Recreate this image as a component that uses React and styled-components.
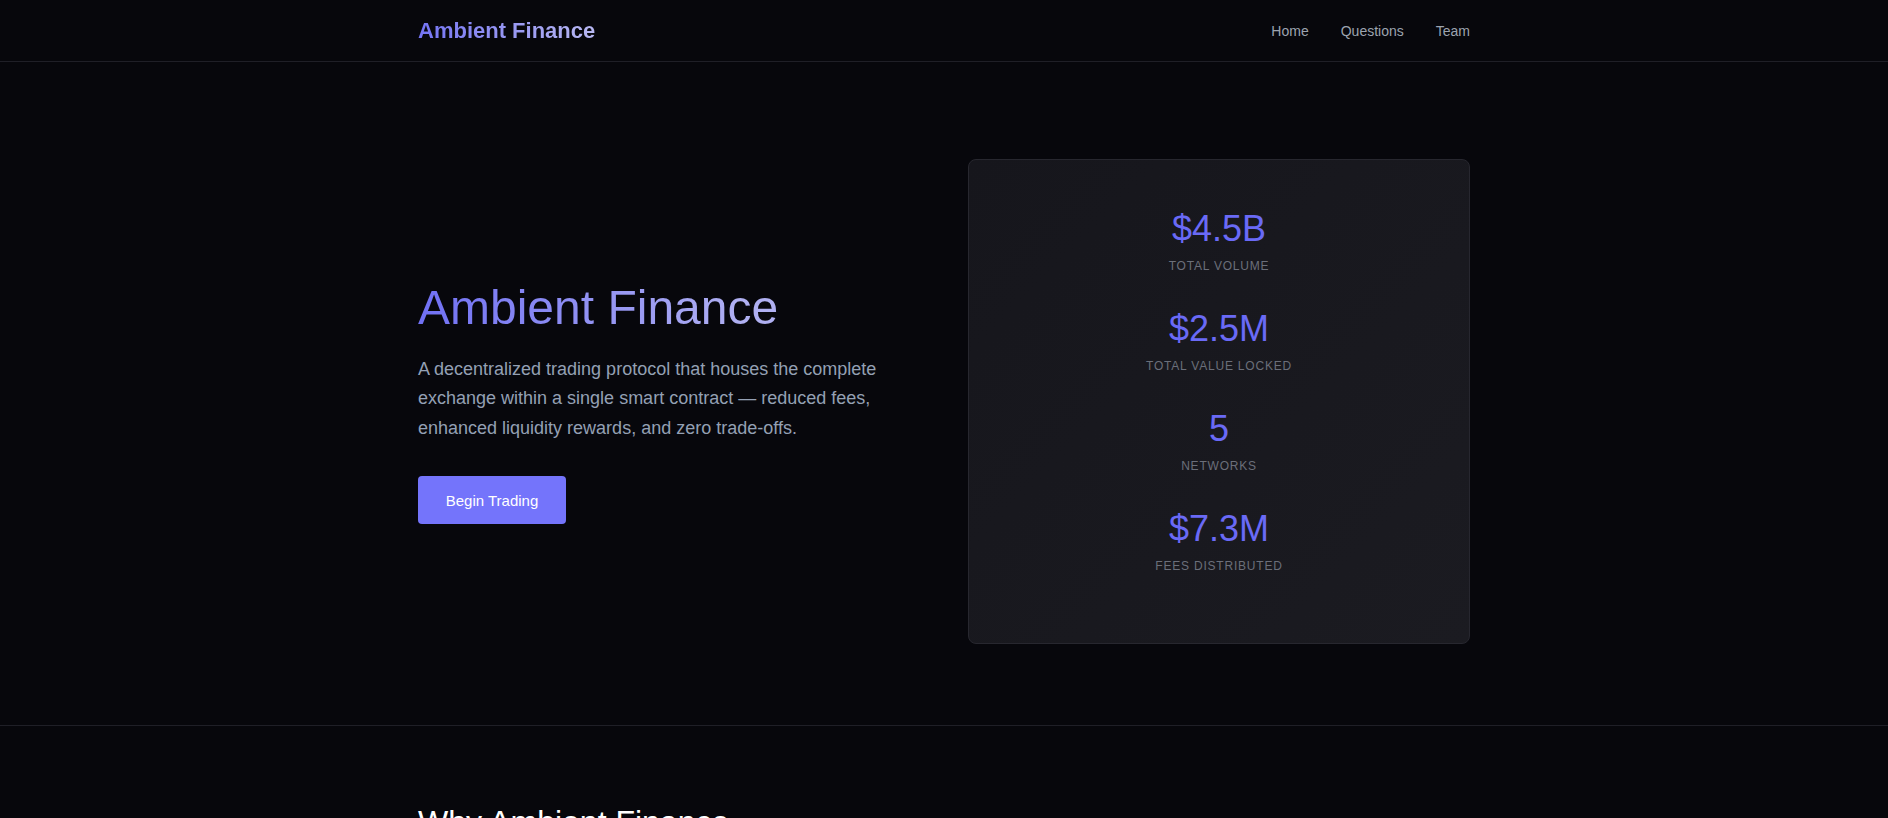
import React from "react";
import styled, { createGlobalStyle } from "styled-components";

const Global = createGlobalStyle`
  html, body { margin: 0; padding: 0; background: #07070c; }
  body { font-family: "Liberation Sans", Arial, sans-serif; color: #e5e7eb; }
  * { box-sizing: border-box; }
`;

const Nav = styled.header`
  height: 62px;
  border-bottom: 1px solid #1f1f27;
`;
const Container = styled.div`
  max-width: 1100px;
  margin: 0 auto;
  padding: 0 24px;
`;
const NavInner = styled(Container)`
  height: 100%;
  display: flex;
  align-items: center;
  justify-content: space-between;
`;
const Logo = styled.div`
  font-size: 22px;
  font-weight: 700;
  background: linear-gradient(90deg, #7474f4, #b8b8f2);
  -webkit-background-clip: text;
  background-clip: text;
  color: transparent;
`;
const Links = styled.nav`
  display: flex;
  gap: 32px;
`;
const Link = styled.a`
  font-size: 14px;
  color: #9ca3af;
  text-decoration: none;
`;
const Hero = styled.section`
  padding: 97px 0 81px;
  border-bottom: 1px solid #1f1f27;
`;
const HeroGrid = styled(Container)`
  display: grid;
  grid-template-columns: 1fr 1fr;
  gap: 48px;
  align-items: center;
`;
const Title = styled.h1`
  margin: 0 0 18px;
  font-size: 48px;
  font-weight: 400;
  line-height: 1.2;
  background: linear-gradient(90deg, #7070f4, #b0b0f2 90%);
  -webkit-background-clip: text;
  background-clip: text;
  color: transparent;
  width: fit-content;
`;
const Lead = styled.p`
  margin: 0 0 33px;
  font-size: 18px;
  line-height: 29.5px;
  color: #94a0b4;
  max-width: 480px;
`;
const Button = styled.button`
  width: 148px;
  height: 48px;
  border: none;
  border-radius: 4px;
  background: #7474fb;
  color: #fff;
  font-family: inherit;
  font-size: 15px;
`;
const Card = styled.div`
  background: linear-gradient(135deg, #16161c, #1b1b21);
  border: 1px solid #27272f;
  border-radius: 8px;
  padding: 47px 48px 69px;
  display: flex;
  flex-direction: column;
  gap: 33px;
  align-items: center;
`;
const Stat = styled.div`
  text-align: center;
`;
const Value = styled.div`
  font-size: 36px;
  line-height: 43px;
  color: #6a6af6;
`;
const Label = styled.div`
  margin-top: 8px;
  font-size: 12px;
  line-height: 16px;
  letter-spacing: 0.8px;
  color: #6b6f7a;
  text-transform: uppercase;
`;
const Why = styled.section`
  padding-top: 78px;
`;
const H2 = styled.h2`
  margin: 0;
  font-size: 32px;
  font-weight: 400;
  color: #fff;
`;

const stats = [
  ["$4.5B", "Total Volume"],
  ["$2.5M", "Total Value Locked"],
  ["5", "Networks"],
  ["$7.3M", "Fees Distributed"],
];

export default function App() {
  return (
    <>
      <Global />
      <Nav>
        <NavInner>
          <Logo>Ambient Finance</Logo>
          <Links>
            <Link href="#">Home</Link>
            <Link href="#">Questions</Link>
            <Link href="#">Team</Link>
          </Links>
        </NavInner>
      </Nav>
      <Hero>
        <HeroGrid>
          <div>
            <Title>Ambient Finance</Title>
            <Lead>
              A decentralized trading protocol that houses the complete exchange within a single smart contract — reduced fees, enhanced liquidity rewards, and zero trade-offs.
            </Lead>
            <Button>Begin Trading</Button>
          </div>
          <Card>
            {stats.map(([v, l]) => (
              <Stat key={l}>
                <Value>{v}</Value>
                <Label>{l}</Label>
              </Stat>
            ))}
          </Card>
        </HeroGrid>
      </Hero>
      <Why>
        <Container>
          <H2>Why Ambient Finance</H2>
        </Container>
      </Why>
    </>
  );
}
